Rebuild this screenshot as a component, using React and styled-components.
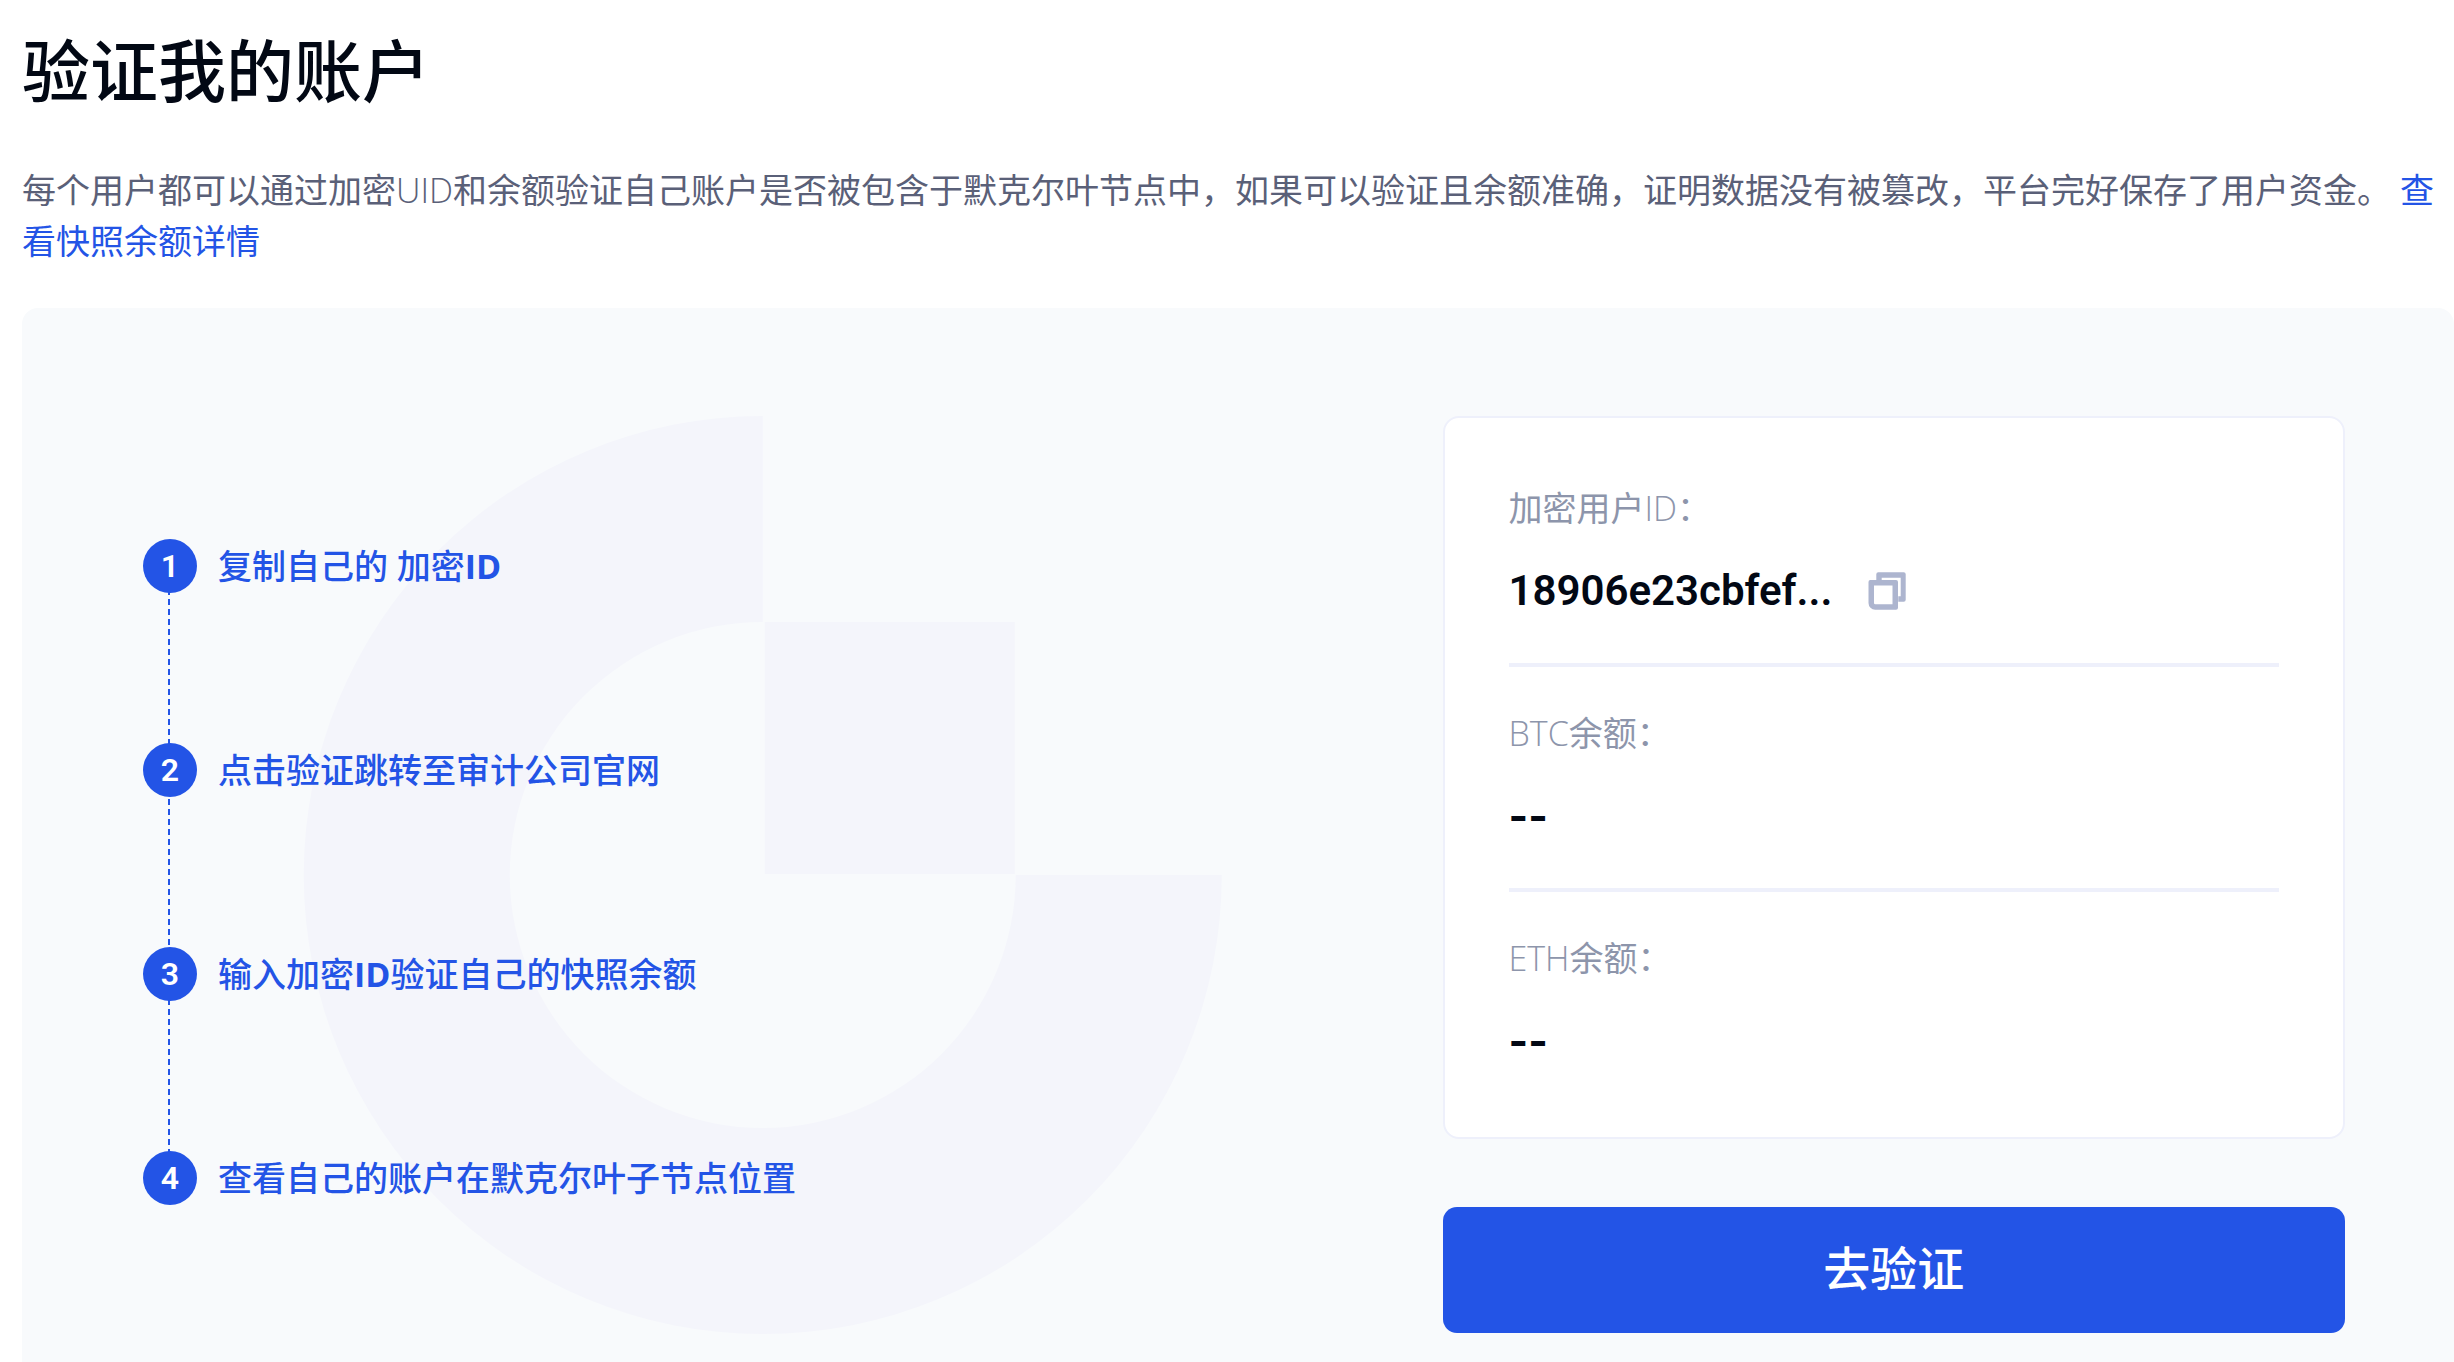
import React from "react";
import styled, { createGlobalStyle } from "styled-components";

const steps = [
    { id: 'copy', text: <>复制自己的 加密<b>ID</b></> },
    { id: 'jump', text: '点击验证跳转至审计公司官网' },
    { id: 'input', text: <>输入加密<b>ID</b>验证自己的快照余额</> },
    { id: 'locate', text: '查看自己的账户在默克尔叶子节点位置' },
];

const coins = ['BTC', 'ETH'];

export default function App() {
    return (
        <Page>
            <GlobalStyle />
            <Title>验证我的账户</Title>
            <Intro>
                每个用户都可以通过加密<Latin>UID</Latin>和余额验证自己账户是否被包含于默克尔叶节点中，如果可以验证且余额准确，证明数据没有被篡改，平台完好保存了用户资金。{' '}
                <IntroLink href="#snapshot">查看快照余额详情</IntroLink>
            </Intro>

            <Panel>
                <StepsColumn>
                    <Watermark viewBox="0 0 918 918" aria-hidden="true">
                        <path d="M459 0A459 459 0 1 0 918 459H712A253 253 0 1 1 459 206Z" />
                        <path d="M461 206H711V458H461Z" />
                    </Watermark>
                    <StepList>
                        {steps.map(({ id, text }, index) => (
                            <Step key={id}>
                                <StepNumber>{index + 1}</StepNumber>
                                <StepText>{text}</StepText>
                            </Step>
                        ))}
                    </StepList>
                </StepsColumn>

                <AccountColumn>
                    <Card>
                        <Field>
                            <Label>加密用户<Latin>ID</Latin>：</Label>
                            <Value>
                                18906e23cbfef...
                                <CopyButton type="button" aria-label="复制">
                                    <CopyIcon />
                                </CopyButton>
                            </Value>
                        </Field>
                        {coins.map((coin) => (
                            <Field key={coin}>
                                <Label><Latin>{coin}</Latin>余额：</Label>
                                <EmptyValue>--</EmptyValue>
                            </Field>
                        ))}
                    </Card>
                    <VerifyButton type="button">去验证</VerifyButton>
                </AccountColumn>
            </Panel>
        </Page>
    )
}

function CopyIcon() {
    return (
        <svg width="38" height="38" viewBox="0 0 38 38" fill="#adb5cf" aria-hidden="true">
            <path d="M8.3 8V2.3a2 2 0 0 1 2-2h25.4a2 2 0 0 1 2 2v25.4a2 2 0 0 1-2 2h-5.4v-5.4h2.4V5.7H13.7V8Z" />
            <path fillRule="evenodd" d="M2.7 8H28a2 2 0 0 1 2 2v25.7a2 2 0 0 1-2 2H7.2A6.7 6.7 0 0 1 .5 31V10a2 2 0 0 1 2.2-2ZM6 13.6V31a1.3 1.3 0 0 0 1.3 1.3h17.2V13.6Z" />
        </svg>
    )
}

const blue = '#2354e6';
const ink = '#020814';
const line = '#eef0fb';

const GlobalStyle = createGlobalStyle`
    body {
        margin: 0;
        background: #fff;
        font-family: "Open Sans", "Noto Sans CJK SC", sans-serif;
    }

    *, *::before, *::after {
        box-sizing: border-box;
    }
`

const Page = styled.main`
    min-height: 100vh;
    padding: 29px 0 0 22px;
    display: flex;
    flex-direction: column;
`

const Title = styled.h1`
    margin: 0;
    color: ${ink};
    font-size: 68px;
    font-weight: 500;
    line-height: 84px;
`

const Intro = styled.p`
    margin: 52px 0 41px;
    color: #5a6078;
    font-size: 34px;
    font-weight: 400;
    line-height: 51px;
`

const Latin = styled.span`
    font-weight: 300;
`

const IntroLink = styled.a`
    color: ${blue};
    text-decoration: none;
`

const Panel = styled.section`
    flex: 1;
    display: grid;
    grid-template-columns: minmax(0, 7fr) minmax(0, 5fr);
    align-items: start;
    gap: 48px;
    padding: 108px 109px 28px;
    background: #f8fafc;
    border-radius: 16px 16px 0 0;
`

const StepsColumn = styled.div`
    position: relative;
    align-self: stretch;
    display: flex;
    align-items: center;
    padding: 0 0 6px 12px;
`

const Watermark = styled.svg`
    position: absolute;
    inset: 0;
    width: 100%;
    height: 100%;
    fill: #f4f5fb;
`

const StepList = styled.ol`
    position: relative;
    margin: 0;
    padding: 0;
    list-style: none;
    display: flex;
    flex-direction: column;
    gap: 150px;

    /* dashed line that runs behind the numbers */
    &::before {
        content: '';
        position: absolute;
        top: 30px;
        bottom: 30px;
        left: 25px;
        width: 2px;
        background: repeating-linear-gradient(${blue} 0 6px, transparent 6px 10px);
    }
`

const Step = styled.li`
    position: relative;
    display: flex;
    align-items: center;
    gap: 21px;
`

const StepNumber = styled.span`
    width: 54px;
    height: 54px;
    border-radius: 50%;
    display: flex;
    align-items: center;
    justify-content: center;
    background: ${blue};
    color: #fff;
    font-family: Roboto, sans-serif;
    font-size: 32px;
    font-weight: 600;
`

const StepText = styled.span`
    color: ${blue};
    font-size: 34px;
    font-weight: 500;
    line-height: 50px;

    b {
        font-weight: 700;
    }
`

const AccountColumn = styled.div`
    display: flex;
    flex-direction: column;
    gap: 68px;
`

const Card = styled.dl`
    margin: 0;
    padding: 24px 64px;
    background: #fff;
    border: 2px solid ${line};
    border-radius: 16px;
`

const Field = styled.div`
    padding: 42px 0;

    & + & {
        border-top: 4px solid ${line};
    }
`

const Label = styled.dt`
    margin-bottom: 29px;
    color: #8d95ab;
    font-size: 34px;
    font-weight: 400;
    line-height: 48px;
`

const Value = styled.dd`
    margin: 0;
    display: flex;
    align-items: center;
    gap: 36px;
    color: ${ink};
    font-family: Roboto, sans-serif;
    font-size: 42px;
    font-weight: 600;
    line-height: 60px;
`

const EmptyValue = styled(Value)`
    font-family: Inter, sans-serif;
    font-weight: 700;
`

const CopyButton = styled.button`
    display: flex;
    padding: 0;
    border: 0;
    background: none;
    cursor: pointer;
`

const VerifyButton = styled.button`
    height: 126px;
    padding: 0 0 10px;
    border: 0;
    border-radius: 14px;
    background: ${blue};
    color: #fff;
    font-family: inherit;
    font-size: 47px;
    font-weight: 500;
    cursor: pointer;
`
